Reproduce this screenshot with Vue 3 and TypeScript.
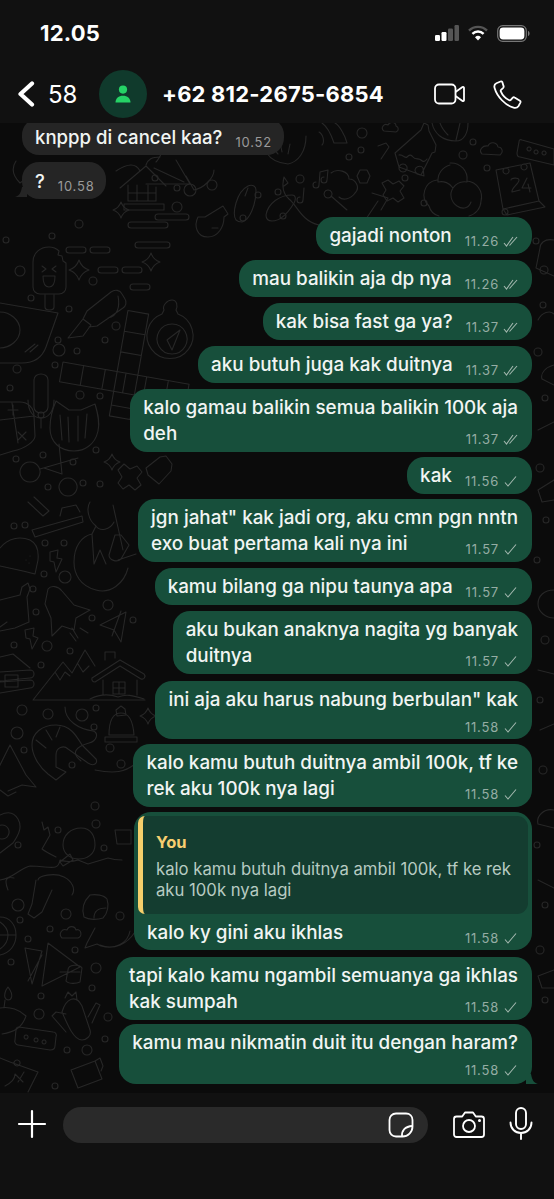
<template>
  <div class="phone">
    <header class="top">
      <div class="status">
        <span class="clock">12.05</span>
        <div class="status-icons">
          <svg width="24" height="16" viewBox="0 0 24 16">
            <rect x="0" y="10" width="5" height="6" rx="1.2" fill="#fff" />
            <rect x="6.5" y="7" width="5" height="9" rx="1.2" fill="#fff" />
            <rect x="13" y="3.5" width="5" height="12.5" rx="1.2" fill="#555" />
            <rect x="19.5" y="0" width="4.5" height="16" rx="1.2" fill="#555" />
          </svg>
          <svg width="20" height="16" viewBox="0 0 20 16">
            <path d="M1 5.6a12.8 12.8 0 0 1 18 0" fill="none" stroke="#555" stroke-width="2.4" />
            <path d="M4.4 8.8a8 8 0 0 1 11.2 0" fill="none" stroke="#fff" stroke-width="2.4" />
            <path d="M10 15.6l-3-3.3a4.3 4.3 0 0 1 6 0z" fill="#fff" />
          </svg>
          <svg width="33" height="17" viewBox="0 0 33 17">
            <rect x=".7" y=".7" width="28.6" height="15.6" rx="5" fill="none" stroke="#777" stroke-width="1.2" />
            <rect x="2.6" y="2.6" width="24.8" height="11.8" rx="3.4" fill="#fff" />
            <path d="M31 6v5c1-.3 1.6-1.3 1.6-2.5S32 6.300 31 6z" fill="#777" />
          </svg>
        </div>
      </div>
      <nav class="bar">
        <svg class="back" width="18" height="26" viewBox="0 0 18 26">
          <path d="M15 2.500L3.500 13 15 23.500" fill="none" stroke="#fff" stroke-width="4.200" stroke-linecap="round" stroke-linejoin="round" />
        </svg>
        <span class="count">58</span>
        <div class="avatar">
          <svg width="18" height="18" viewBox="0 0 18 18">
            <circle cx="9" cy="4.600" r="4.100" fill="#25d366" />
            <path d="M1.500 17.500c0-4.300 3.200-6.800 7.500-6.800s7.500 2.500 7.500 6.800z" fill="#25d366" />
          </svg>
        </div>
        <span class="name">+62 812-2675-6854</span>
        <svg class="video" width="31" height="22" viewBox="0 0 31 22">
          <rect x="1" y="1.500" width="20.500" height="19" rx="4" fill="none" stroke="#fff" stroke-width="1.800" />
          <path d="M21.500 9l7-5c.7-.5 1.500 0 1.500.8v12.400c0 .8-.8 1.300-1.500.8l-7-5" fill="none" stroke="#fff" stroke-width="1.800" stroke-linejoin="round" />
        </svg>
        <svg class="call" width="29" height="29" viewBox="0 0 29 29">
          <path d="M7.500 1.500L3.400 3.300C1.500 4.200 1 6 1.600 8c2.400 8.600 10.800 17.500 19 19.700 2 .5 3.700.1 4.800-1.500l2-3.600c.3-.7.1-1.400-.5-1.800l-5.300-3.300c-.6-.4-1.300-.3-1.800.2l-2 2.200c-.4.500-1 .5-1.500.3-3.600-1.700-7-5.300-8.500-8.900-.2-.5-.1-1.100.3-1.500l2.100-2c.5-.5.6-1.200.3-1.800L9.300 2c-.4-.6-1.100-.8-1.800-.5z" fill="none" stroke="#fff" stroke-width="1.800" stroke-linejoin="round" />
        </svg>
      </nav>
    </header>

    <main class="chat">
      <svg class="doodles" width="554" height="970" viewBox="0 123 554 970" aria-hidden="true">
        <g fill="none" stroke="#272727" stroke-width="1.100" stroke-linecap="round" stroke-linejoin="round">
          <circle v-for="(c, i) in dots" :key="'c' + i" :cx="c[0]" :cy="c[1]" :r="c[2]" />
          <path v-for="(d, i) in doodles" :key="'d' + i" :d="d" />
          <path v-for="(s, i) in stars" :key="'s' + i" :d="starPath(s[0], s[1], s[2])" />
          <rect v-for="(p, i) in pills" :key="'p' + i" :x="p[0]" :y="p[1]" :width="p[2]" height="6" rx="3" />
          <g transform="translate(63 362) rotate(10)">
            <path d="M0 0h128v20H0zM21 0v20M43 0v20M64 0v20M85 0v20M107 0v20M55-62h21v107H55zM55-41h21M55-20h21M55 34h21" />
          </g>
        </g>
      </svg>

      <div class="list">
        <div class="bubble in first">
          <p class="text">knppp di cancel kaa?<span class="meta"><span class="time">10.52</span></span></p>
        </div>
        <div class="bubble in tail-left">
          <svg class="tail" width="12" height="12" viewBox="0 0 12 12"><path d="M12 0v10H0c4-1 6-4 7-10z" fill="#252525" /></svg>
          <p class="text">?<span class="meta"><span class="time">10.58</span></span></p>
        </div>
        <div class="spacer"></div>

        <div v-for="m in messages" :key="m.text" class="bubble out" :style="{ marginBottom: m.gap + 'px' }">
          <div v-if="m.quote" class="quote">
            <div class="quote-who">You</div>
            <div class="quote-text">{{ m.quote }}</div>
          </div>
          <p class="text" :class="{ 'text--reply': m.quote }"><span v-if="firstLine(m.text)" class="line">{{ firstLine(m.text) }}</span>{{ lastLine(m.text) }}<span class="meta" :class="{ 'meta--below': m.below }"><span class="time">{{ m.time }}</span><svg width="15" height="11" viewBox="0 0 15 11" fill="none" class="tick"><path v-if="m.read" d="M1 7l2.500 3L10 1" /><path v-if="m.read" d="M6.500 9.500L14 1" /><path v-else d="M2 6.500l3 3.500 8-9.500" /></svg></span></p>
          <svg v-if="m.tail" class="tail tail--right" width="12" height="12" viewBox="0 0 12 12"><path d="M0 0v10h12C8 9 6 6 5 0z" fill="#174f3b" /></svg>
        </div>
      </div>
    </main>

    <footer class="composer">
      <svg width="30" height="30" viewBox="0 0 30 30" class="plus"><path d="M15 2v26M2 15h26" stroke="#fff" stroke-width="2.200" stroke-linecap="round" /></svg>
      <div class="field">
        <svg width="26" height="26" viewBox="0 0 26 26" fill="none" stroke="#fff" stroke-width="1.800" stroke-linejoin="round">
          <path d="M8 1.500h10c3.800 0 6.500 2.700 6.500 6.500v6.500c0 5.500-4.500 10-10 10H8c-3.800 0-6.500-2.700-6.500-6.500V8c0-3.800 2.700-6.500 6.500-6.500z" />
          <path d="M14 24.500c-.5-6 3-10 10.500-10.500" />
        </svg>
      </div>
      <svg width="32" height="27" viewBox="0 0 32 27" fill="none" stroke="#fff" stroke-width="1.800" stroke-linejoin="round" class="cam">
        <path d="M3.500 5.500h5.700L12 1.500h8l2.800 4h5.700c1.400 0 2.500 1.100 2.500 2.500v15.500c0 1.400-1.100 2.500-2.500 2.500h-25C2.100 26 1 24.900 1 23.500V8c0-1.400 1.100-2.500 2.500-2.500z" />
        <circle cx="16" cy="15" r="6" />
        <circle cx="26.500" cy="9.500" r=".6" fill="#fff" />
      </svg>
      <svg width="24" height="33" viewBox="0 0 24 33" fill="none" stroke="#fff" stroke-width="1.900" stroke-linecap="round" class="mic">
        <rect x="7" y="1" width="10" height="21" rx="5" />
        <path d="M1.500 15.500c0 6 4.500 10.500 10.500 10.500s10.500-4.500 10.500-10.500M12 26v6" />
      </svg>
    </footer>
  </div>
</template>

<script setup lang="ts">
interface Message {
  text: string
  time: string
  read?: boolean
  below?: boolean
  quote?: string
  tail?: boolean
  gap: number
}

const messages: Message[] = [
  { text: 'gajadi nonton', time: '11.26', read: true, gap: 6 },
  { text: 'mau balikin aja dp nya', time: '11.26', read: true, gap: 6 },
  { text: 'kak bisa fast ga ya?', time: '11.37', read: true, gap: 6 },
  { text: 'aku butuh juga kak duitnya', time: '11.37', read: true, gap: 6 },
  { text: 'kalo gamau balikin semua balikin 100k aja\ndeh', time: '11.37', read: true, gap: 5 },
  { text: 'kak', time: '11.56', gap: 5 },
  { text: 'jgn jahat" kak jadi org, aku cmn pgn nntn\nexo buat pertama kali nya ini', time: '11.57', gap: 6 },
  { text: 'kamu bilang ga nipu taunya apa', time: '11.57', gap: 6 },
  { text: 'aku bukan anaknya nagita yg banyak\nduitnya', time: '11.57', gap: 7 },
  { text: 'ini aja aku harus nabung berbulan" kak', time: '11.58', below: true, gap: 5 },
  { text: 'kalo kamu butuh duitnya ambil 100k, tf ke\nrek aku 100k nya lagi', time: '11.58', gap: 5 },
  { text: 'kalo ky gini aku ikhlas', time: '11.58', quote: 'kalo kamu butuh duitnya ambil 100k, tf ke rek\naku 100k nya lagi', gap: 7 },
  { text: 'tapi kalo kamu ngambil semuanya ga ikhlas\nkak sumpah', time: '11.58', gap: 4 },
  { text: 'kamu mau nikmatin duit itu dengan haram?', time: '11.58', below: true, tail: true, gap: 0 },
]

function firstLine(text: string): string {
  const i = text.indexOf('\n')
  return i < 0 ? '' : text.slice(0, i)
}

function lastLine(text: string): string {
  return text.slice(text.indexOf('\n') + 1)
}

// wallpaper: [x, y, r] in page coordinates
const dots: number[][] = [
  [79, 224, 4], [52, 236, 3], [20, 271, 5], [93, 281, 4], [31, 298, 3], [69, 309, 3], [58, 340, 3],
  [116, 326, 4], [105, 340, 3], [59, 350, 6], [77, 351, 3], [55, 365, 3], [17, 369, 4], [10, 388, 3],
  [80, 395, 4], [100, 396, 3], [41, 415, 3], [96, 450, 3], [43, 455, 3], [73, 462, 3], [16, 459, 3],
  [83, 483, 3], [100, 484, 3], [48, 487, 3], [25, 525, 3], [14, 526, 3], [45, 543, 3], [64, 543, 3],
  [65, 577, 6], [44, 574, 3], [33, 589, 3], [108, 605, 5], [92, 618, 3], [36, 612, 3], [133, 620, 3],
  [14, 645, 3], [47, 646, 5], [70, 651, 3], [41, 665, 3], [22, 710, 5], [48, 714, 5], [82, 715, 6],
  [96, 708, 3], [94, 727, 3], [17, 733, 6], [110, 748, 4], [24, 750, 3], [72, 765, 3], [121, 764, 4],
  [95, 806, 4], [96, 824, 4], [58, 830, 3], [18, 845, 3], [104, 848, 3], [66, 914, 5], [18, 905, 6],
  [120, 916, 4], [20, 920, 3], [50, 929, 3], [28, 939, 3], [75, 950, 3], [11, 962, 3], [96, 968, 5],
  [92, 988, 3], [41, 996, 3], [108, 1017, 4], [39, 1014, 5], [105, 1039, 3], [67, 1050, 3], [87, 1050, 5],
  [55, 1086, 3], [155, 178, 3], [177, 188, 3], [190, 190, 6], [177, 207, 5], [258, 195, 3], [243, 218, 3],
  [212, 185, 5], [278, 192, 3], [300, 179, 4], [283, 216, 3], [362, 133, 5], [361, 150, 3], [349, 157, 3],
  [405, 178, 3], [463, 155, 4], [473, 142, 3], [487, 168, 3], [424, 203, 3], [505, 212, 3], [520, 223, 3],
  [6, 240, 3], [536, 241, 3], [544, 270, 4], [543, 305, 3], [538, 352, 4], [545, 398, 3], [540, 468, 4],
  [546, 520, 3], [537, 560, 3], [545, 640, 4], [540, 700, 3], [543, 770, 4], [537, 845, 3], [545, 905, 3],
  [540, 950, 4], [545, 1000, 3],
]

const stars: number[][] = [
  [79, 270, 10], [121, 210, 8], [112, 462, 8], [148, 716, 8], [151, 262, 9],
]

const pills: number[][] = [
  [66, 247, 20], [90, 247, 20], [98, 267, 20], [122, 267, 20], [130, 284, 20], [128, 222, 40], [135, 242, 35],
  [155, 214, 34],
]

function starPath(x: number, y: number, r: number): string {
  const k = r * 0.25
  return `M${x} ${y - r}Q${x + k} ${y - k} ${x + r} ${y}Q${x + k} ${y + k} ${x} ${y + r}Q${x - k} ${y + k} ${x - r} ${y}Q${x - k} ${y - k} ${x} ${y - r}z`
}

const doodles: string[] = [
  // ice pop
  'M33 262c0-9 7-15 16-15 4 0 7 1 10 4l-1 4 4 1 1 5 3 2v24c0 4-3 7-7 7H40c-4 0-7-3-7-7zM45 295v12c0 4 9 4 9 0v-12M42 266l4 3-4 3M56 266l-4 3 4 3M43 276h12c0 8-3 11-6 11s-6-3-6-11z',
  // pen
  'M68 338l15-19 8 6-8 11zM83 319l4-8 24-19c4-3 9-2 11 2l3 5c2 3 1 7-2 9l-26 18-8 1M118 296c2 10 0 20-10 22',
  // compass
  'M172 300c5 0 6 6 4 10l2 4a23 23 0 1 1-16 0l2-4c-2-4 3-10 8-10zM172 324a15 15 0 1 0 .1 0zM180 330l-8 20-5-10z',
  // blob with smile
  'M0 303l58 10-12 34c-4 11-12 16-24 16H0M0 312c10 0 20 8 20 18s-10 18-20 18M25 352l10-8M30 352l8-7',
  // mic
  'M34 380c0-8 14-8 14 0v27c0 8-14 8-14 0zM28 400c0 12 6 18 13 18s13-6 13-18M41 418v10',
  // cat
  'M50 428c0-10 2-18 6-27l13 9h12l14-6c3 10 5 18 3 27-3 14-14 20-24 20-14 0-24-9-24-23zM60 415l2 25M68 417l1 25M78 416v25M87 414l-2 24',
  // calculator
  'M0 402h20c8 0 14 6 14 14l1 20c0 5-10 13-22 15l-13 4M0 420l34-4M12 403l6 40M8 410h10M13 405v10M18 432l8 8M26 432l-8 8',
  // scissors
  'M30 462a10 10 0 1 0 .1 0zM68 478a9 9 0 1 0 .1 0zM59 444l3 30M78 458l-38 11M62 474l-18-6',
  // cross + lock
  'M118 470l6-6 6 5 7-3 5 6-5 6 4 7-6 5-6-5-6 4-5-6 4-6zM146 468l14-11 6-1 6 8-1 7-12 13-11-9z',
  // person
  'M90 502c-4 6-2 18 6 24l-4 8c-10 2-18 12-18 28 0 12 6 24 22 28 14 4 28-6 32-22M96 526c4 6 14 4 18-4M113 505l10 45M118 560l18-6M92 534l2 30 6-14 6 14M115 535l-6 20c0 5 8 8 12 4l8-14-8-10z',
  // pen long + cup
  'M32 530l50-14 1 6-48 15zM60 516l2-8 14-3 4 7M28 502l15 14 6-5-15-14',
  // taco
  'M0 548c8-10 20-12 30-8 6 3 9 10 8 20l-3 14-12-3-23-5M26 560h.1M30 556h.1M29 563h.1',
  // bolt
  'M50 552l8-2-1 8 5 1-6 13-2-10-4-1zM25 630l9-2-1 8 5 2-6 11-2-10-4-1z',
  // hand + sleeve
  'M0 600l20-5 2-8 6-4 2 6-3 8 2 25-14 6-15 3M0 627l7-5',
  // rocket
  'M48 589c3-4 10-3 14 2l12 14 16 5-14 8-2 12-12-4-10 10-1-18-6-14zM72 628l6 10M80 628l8 5M70 633l6 8',
  // paper plane
  'M100 625l26-13-5 30-7-12zM114 630l-2 6 9-25',
  // log cabin
  'M0 657l13-3 17 14M0 672l30-2a4 4 0 0 1 0 8l-30 3M0 682l30-2a4 4 0 0 1 0 8l-30 5M5 675h13v12H5z',
  // mountains
  'M33 700l30-38 9 11 13-23 10 16M33 700h112M55 672l5 8 5-8 5 4M78 664l5 8 6-6',
  // house
  'M92 678l28-18 24 14a3 3 0 0 1-3 5l-21-13-25 16a3 3 0 0 1-3-4zM103 680v15M137 680v15M113 682h12v12h-12zM119 682v12M113 688h12M105 660v-8h10v6M90 699c10-5 20-5 28-2 8-3 14-2 26 2',
  // hat
  'M105 742h32v-5h-32zM109 735c0-14 4-22 12-22s12 8 13 22zM116 710l5-4 4 3 1 6-9 1z',
  // shrimp
  'M32 745c0-12 10-20 24-20s20 10 26 20l14 14c2 4-2 8-8 4l-20-14c-4-4-12-2-12 6v12l10 5-10 8-8-6c-10-8-16-20-16-29zM36 740l10 8M46 730l6 10M60 727l-4 10',
  // tree
  'M10 745l-12 24M10 745l16 30 10 12-14-2-14 6M0 790l8 6 8-4',
  // squiggle
  'M65 707c0 14 14 22 28 24 6 2 4 10-4 12-14 4-18 10-8 18M95 770c20 4 30 2 40-6',
  // rocket 2
  'M0 815c8-4 14-3 18 4s2 14-5 24l-13 10M2 825a7 7 0 1 0 .1 0z',
  // astronaut
  'M63 845c0-10 8-17 18-17s14 8 14 17-8 14-16 14-16-5-16-14zM42 822l2 8 4-3 2 8-8 14c4 3 10 6 14 8M0 880c14-2 20-12 30-14 20 0 28 6 30-6 6 2 12 2 18 0l10 4 20-6c6 2 12 2 14 2M38 880c0-4 16-8 26-3 8 4 12 12 8 18M36 880l-4 24-4 10 6 4 8-6 10-22M8 890c-4-10-2-14 6-12M60 862l10-8 3 6-10 6zM115 830h16v14h-14z',
  // cookie
  'M90 895c6-1 14 0 17 4 2 6 1 14-4 19-6 2-14 2-19-1-2-6-2-14 6-22zM94 918c0-6 4-10 12-10',
  // cloud
  'M62 938c-4-4 0-10 5-8 2-5 8-4 9 0 5-2 7 6 2 8z',
  // whale
  'M95 928l-8 15-2 5 12-4 4 2c14 4 26-2 34-14M100 945c14 6 28-2 30-14',
  // globe
  'M0 917c10 0 16 8 16 18s-6 18-16 20M0 922c6 4 8 8 8 13s-2 10-8 14M0 935h16',
  // pyramids
  'M25 948l17 3-10 33-7-36zM48 943l32 24-38 19zM42 955l-14 26M68 970c0-6 12-6 14-2l-2 14c-4 2-12 2-14-1zM60 972h20',
  // candle + pot
  'M6 990c-2 5-2 9 2 10 4 0 5-5 2-10l-2-3zM5 1000l-1 8M0 1008c10-2 20 2 26 8-4 12-12 16-24 18',
  // cactus
  'M62 1012c4-14 14-18 20-6l8 24c2 6-4 10-8 10-8 0-14-14-20-28zM66 1014l-10-2-4 4 14 16M88 1017l8-14 4 2-8 18M65 998l3-6 4 4 4-4 1 8',
  // notification
  'M19 1027l34 5c3 0 4 3 3 5l-1 9c0 3-3 4-5 4l-32-5c-2 0-4-3-3-5l1-10c0-2 1-3 3-3zM28 1037h.1a2 2 0 1 0 0 .1M36 1038a2 2 0 1 0 .1 0M44 1040a2 2 0 1 0 .1 0',
  // calendar 24
  'M10 1062l28 10-10 20M0 1058l10 4M17 1060a3 3 0 1 0 .1 0M5 1086c8-4 10-8 10-12l8 8M18 1082l6-10',
  // camera
  'M71 1070l24-9 7 18-24 9-7-18zM95 1061l5-3 3 8-2 5',
  // cottage top
  'M395 153l26-23 3-7 4 2 1 6 7 14-1 7-3 1-11 22-22-8zM399 155c4-1 6 4 8 2s4-3 6 0 6 1 8 3 4 2 6-1M403 164a4 4 0 1 0 .1 0zM415 171c0-5 6-6 8-3l1 8-7-2z',
  // croissant, shell
  'M322 123c6 4 10 14 12 20l13 0c-2-8-8-18-12-20',
  'M319 132c4 2 6 10 3 13',
  // cloud top
  'M384 131c-4-3 0-8 4-6 2-4 8-3 8 1 3 1 3 5 0 6zM482 154c-4-4 1-9 6-8 2-5 9-4 10 1 4 0 6 5 2 8z',
  // basketball
  'M432 123c2 10 10 18 24 18 8 0 12-8 12-18M440 123c2 6 4 8 8 12M460 123l-4 17',
  // notification top
  'M522 140l32 9v16l-34-8c-2 0-3-2-3-4l2-11c0-2 1-3 3-2zM529 147a2 2 0 1 0 .1 0M536 150a2 2 0 1 0 .1 0M544 151a2 2 0 1 0 .1 0',
  // flower
  'M450 163a16 16 0 0 1 17 18 16 16 0 0 1 14 20 16 16 0 0 1-12 15M437 180a15 15 0 0 0-8 26 14 14 0 0 0 10 10M450 165a16 16 0 0 0-12 17 14 14 0 0 1 15 6 14 14 0 0 1 14-6M453 188c-4 6-2 14 4 18s12 2 14-4',
  // calendar 24 top
  'M496 170l34-7 9 38-36 8zM506 168a3 3 0 1 0 .1 0M524 164a3 3 0 1 0 .1 0M503 209l4 6 38-8-6-6M511 180c0-2 8-3 8 0 0 4-8 8-7 12l8-2M527 178l-5 10h9M528 184l2 8',
  // x + hexagon
  'M382 183l6-3 5 4 6-3 5 5-4 5 4 7-6 4-5-4-6 3-4-6 3-5zM360 170h7l3 6-3 7h-7l-3-7z',
  // tree + cup etc
  'M331 173c6-5 18-2 18 6 6 0 12 8 6 14-4 6-12 8-16 4M328 190a4 4 0 1 0 .1 0M331 196l16 14M372 193l16 5-7 12M378 201l-16 24',
  // sevens, music
  'M378 146l8-3 3 4-8 12',
  'M320 172l-1 13a3 3 0 1 1-3-3M320 172l8-2-1 10a3 3 0 1 1-3-3M304 188l-1 12a3 3 0 1 1-3-3',
  'M284 177c-2 8-2 16 5 22 8 6 12 22 30 26M284 177l4 6-4 3',
  // hut
  'M120 188l26-22 20 20M140 171c-4-8-12-8-24 0M146 165c2-6 6-8 14-8M128 185v16h28v-14M128 193h28M137 185v16M148 185v16M124 204h40v6h-40z',
  // sandal, oval
  'M236 220c-4-6 0-28 12-34 4-2 8 0 8 4 0 14-6 30-14 32-2 0-4 0-6-2zM248 188l-3 8M266 215c2-12 14-20 26-20 4 0 4 4 2 8-6 10-14 18-22 18-4 0-6-2-6-6z',
  // flask
  'M205 217l18-11 5 8-4 3c0 10-6 20-16 20-12 0-14-12-10-20zM212 228h6',
  // left of bubbles - small things
  'M16 161c-4 6-4 14 4 22l8-6M210 150l3-8M214 170c0 8-10 18-20 20l-8-14M262 130c0 18 4 32 26 34 10-2 18-12 18-28M272 142c2 6 4 10 6 12M280 142l2 10M290 144l-2 10M176 160l14 24h-44M166 144c-4 8-6 14-10 18M154 168l30 14',
  // far right strip
  'M554 240c-10-2-14 4-14 8l-4 20 18 8M538 320c4-8 12-10 16-6M554 365c-8 2-14 8-12 14l12 6M538 430l16-8M554 480l-16 10 4 12 12-2M554 590c-10 0-16 6-16 14s8 14 16 14M538 670l16 4M540 730l14-6M554 810c-10-2-18 6-16 14l16 4M538 880l16 8M554 970l-16 6 4 12 12 0',
]
</script>

<style>
html, body {
  margin: 0;
  background: #111;
}
</style>

<style scoped>
.phone {
  width: 554px;
  height: 1199px;
  display: flex;
  flex-direction: column;
  overflow: hidden;
  background: #0b0b0b;
  color: #fff;
  font-family: Inter, "Noto Sans", sans-serif;
}

.top {
  height: 123px;
  flex-shrink: 0;
  background: #111;
  box-sizing: border-box;
  position: relative;
  z-index: 1;
}

.status {
  display: flex;
  justify-content: space-between;
  align-items: center;
  padding: 21px 24px 0 40px;
  height: 24px;
}

.clock {
  font-size: 22px;
  font-weight: 700;
  letter-spacing: .2px;
}

.status-icons {
  display: flex;
  align-items: center;
  gap: 9px;
}

.bar {
  display: flex;
  align-items: center;
  margin-top: 25px;
  height: 48px;
}

.back {
  margin-left: 17px;
}

.count {
  margin-left: 13px;
  width: 30px;
  font-size: 24px;
}

.avatar {
  margin-left: 21px;
  width: 48px;
  height: 48px;
  border-radius: 50%;
  background: #103a2c;
  display: flex;
  align-items: center;
  justify-content: center;
}

.name {
  margin-left: 15px;
  font-size: 22px;
  font-weight: 700;
  letter-spacing: .2px;
  white-space: nowrap;
}

.video {
  margin-left: auto;
}

.call {
  margin-left: 28px;
  margin-right: 32px;
}

.chat {
  flex: 1;
  position: relative;
  overflow: hidden;
  background: #0b0b0b;
}

.doodles {
  position: absolute;
  top: 0;
  left: 0;
}

.list {
  position: relative;
  display: flex;
  flex-direction: column;
  align-items: flex-end;
  padding: 0 22px;
  margin-top: -5px;
}

.spacer {
  height: 18px;
}

.bubble {
  position: relative;
  box-sizing: border-box;
  padding: 6px 14px 5px 13px;
  border-radius: 17px;
  background: #174f3b;
}

.bubble.out:last-child {
  padding-bottom: 7px;
}

.bubble.in {
  align-self: flex-start;
  background: #252525;
}

.bubble.in .text {
  font-size: 18.600px;
}

.bubble.first {
  margin-bottom: 7px;
}

.text {
  margin: 0;
  font-size: 18.850px;
  font-weight: 500;
  line-height: 26px;
  color: #f1f5f3;
  display: flow-root;
}

.line {
  display: block;
}

.text--reply {
  margin: 6px 0 -1px;
}

.meta {
  float: right;
  display: inline-flex;
  align-items: center;
  gap: 4px;
  margin: 11px 0 0 13px;
  font-size: 13px;
  font-weight: 400;
  line-height: 14px;
  color: #95ada4;
  letter-spacing: .8px;
}

.meta--below {
  float: none;
  display: flex;
  justify-content: flex-end;
  margin: 7px 0 0;
}

.bubble.in .meta {
  color: #9a9a9a;
  margin-right: -2px;
}

.tick {
  stroke: #a3b8af;
  stroke-width: 1.100;
}

.tail {
  position: absolute;
  bottom: 0;
  left: -7px;
}

.tail--right {
  left: auto;
  right: -6px;
  bottom: -2px;
}

.quote {
  position: relative;
  margin: -2px -10px 0 -9px;
  padding: 14px 17px 13px 13px;
  background: #143d30;
  border-left: 5px solid #f5cf6b;
  border-radius: 7px 11px 11px 7px;
  box-sizing: border-box;
}

.quote-who {
  font-size: 16.500px;
  font-weight: 700;
  line-height: 24px;
  color: #f7cf70;
}

.quote-text {
  margin-top: 5px;
  font-size: 16.700px;
  line-height: 21px;
  color: #b7cbc2;
  white-space: pre-line;
}

.composer {
  height: 106px;
  flex-shrink: 0;
  background: #111;
  box-sizing: border-box;
  display: flex;
  align-items: flex-start;
  padding-top: 14px;
  position: relative;
}

.plus {
  margin: 2px 0 0 17px;
}

.field {
  margin: 0 0 0 16px;
  width: 365px;
  height: 36px;
  border-radius: 18px;
  background: #2a2a2a;
  display: flex;
  align-items: center;
  justify-content: flex-end;
  padding-right: 14px;
  box-sizing: border-box;
}

.cam {
  margin: 4px 0 0 25px;
}

.mic {
  margin: 0 0 0 24px;
}
</style>
